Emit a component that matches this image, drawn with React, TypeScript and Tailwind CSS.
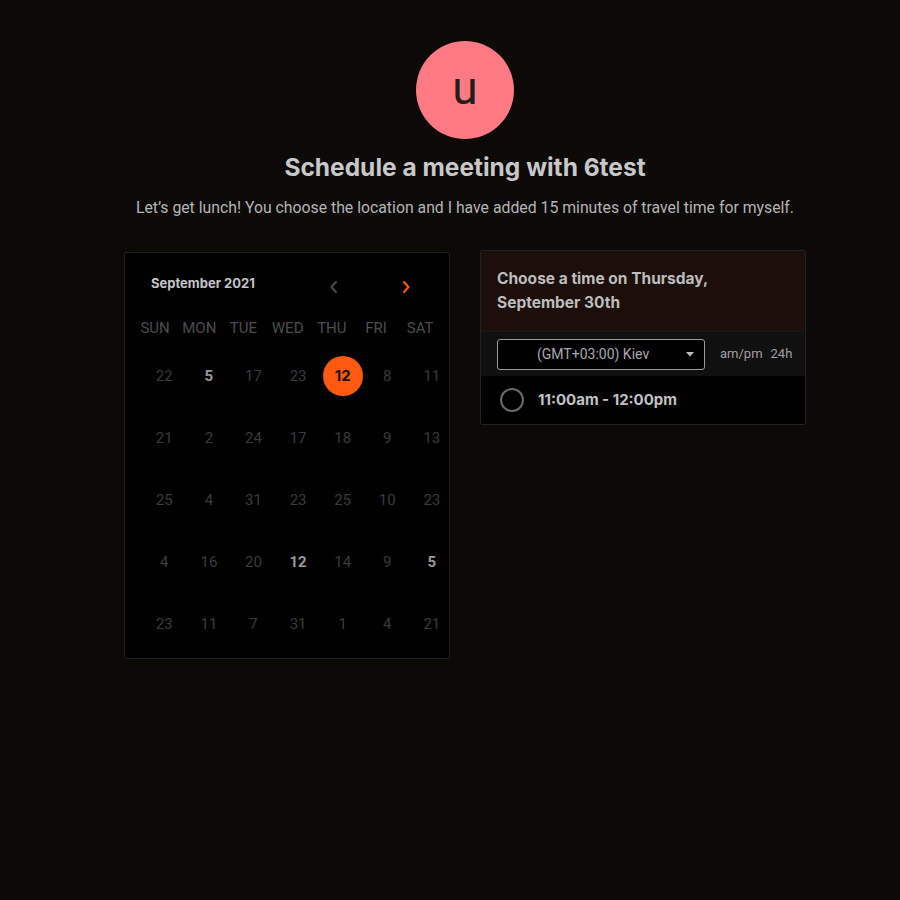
import React from 'react';

const weekdays = ['SUN', 'MON', 'TUE', 'WED', 'THU', 'FRI', 'SAT'];

// value, bold?, selected?
const weeks: [string, boolean?, boolean?][][] = [
  [['22'], ['5', true], ['17'], ['23'], ['12', true, true], ['8'], ['11']],
  [['21'], ['2'], ['24'], ['17'], ['18'], ['9'], ['13']],
  [['25'], ['4'], ['31'], ['23'], ['25'], ['10'], ['23']],
  [['4'], ['16'], ['20'], ['12', true], ['14'], ['9'], ['5', true]],
  [['23'], ['11'], ['7'], ['31'], ['1'], ['4'], ['21']],
];

const Chevron = ({ dir, color }: { dir: 'left' | 'right'; color: string }) => (
  <svg width="10" height="14" viewBox="0 0 10 14" fill="none">
    <path
      d={dir === 'left' ? 'M7 2 L2.5 7 L7 12' : 'M3 2 L7.5 7 L3 12'}
      stroke={color}
      strokeWidth="2"
      strokeLinecap="round"
      strokeLinejoin="round"
    />
  </svg>
);

const Calendar: React.FC = () => (
  <div className="mt-[2px] w-[326px] h-[407px] bg-black border border-[#1f1f1f] rounded-[2px] pt-[19px]">
    {/* Month header */}
    <div className="flex items-center h-[24px] pl-[26px]">
      <span className="text-[13px] font-bold text-[#c4c4c4] font-['Inter',sans-serif]">September 2021</span>
      <div className="ml-[74px] mt-[6px] flex items-center gap-[62px]">
        <Chevron dir="left" color="#4a4a4a" />
        <Chevron dir="right" color="#ff5a14" />
      </div>
    </div>

    {/* Weekday labels */}
    <div className="mt-[20px] pl-[8px] grid grid-cols-[repeat(7,44.2px)] h-[24px] items-center">
      {weekdays.map((d) => (
        <span key={d} className="text-center text-[15px] text-[#4d4d4d] font-['Roboto',sans-serif]">
          {d}
        </span>
      ))}
    </div>

    {/* Dates */}
    <div className="mt-[5px] pl-[17px]">
      {weeks.map((week, i) => (
        <div key={i} className="grid grid-cols-[repeat(7,44.6px)] h-[62px] items-center">
          {week.map(([v, bold, selected], j) =>
            selected ? (
              <div key={j} className="flex justify-center">
                <span className="w-[40px] h-[40px] rounded-full bg-[#ff5a0f] flex items-center justify-center text-[15px] font-bold text-[#1a0a00] font-['Inter',sans-serif]">
                  {v}
                </span>
              </div>
            ) : (
              <span
                key={j}
                className={`text-center text-[15px] font-['Roboto',sans-serif] ${
                  bold ? 'font-bold text-[#9a9a9a]' : 'text-[#3b3b3b]'
                }`}
              >
                {v}
              </span>
            )
          )}
        </div>
      ))}
    </div>
  </div>
);

const TimePanel: React.FC = () => (
  <div className="w-[326px] border border-[#222] rounded-[2px] overflow-hidden">
    <div className="h-[80px] bg-[#1c0e09] px-4 flex items-center">
      <p className="text-[15.5px] leading-[24px] font-bold text-[#bdbdbd] font-['Inter',sans-serif]">
        Choose a time on Thursday,
        <br />
        September 30th
      </p>
    </div>
    <div className="h-[45px] bg-[#101010] flex items-center px-4 border-t border-[#181818]">
      <div className="shrink-0 w-[208px] h-[31px] bg-black border border-[#9a9a9a] rounded-[3px] flex items-center pl-[39px] pr-[10px]">
        <span className="text-[14px] text-[#a8a8a8] font-['Roboto',sans-serif]">(GMT+03:00) Kiev</span>
        <svg className="ml-auto" width="8" height="5" viewBox="0 0 8 5">
          <path d="M0 0 L8 0 L4 4.5 Z" fill="#bdbdbd" />
        </svg>
      </div>
      <span className="ml-[15px] text-[13px] text-[#a0a0a0] font-['Roboto',sans-serif]">am/pm</span>
      <span className="ml-[8px] text-[13px] text-[#a0a0a0] font-['Roboto',sans-serif]">24h</span>
    </div>
    <div className="h-[48px] bg-black flex items-center pl-[19px]">
      <span className="w-[24px] h-[24px] rounded-full border-2 border-[#6a6a6a]" />
      <span className="ml-[14px] text-[15px] font-bold text-[#c2c2c2] font-['Inter',sans-serif]">
        11:00am - 12:00pm
      </span>
    </div>
  </div>
);

const App: React.FC = () => {
  return (
    <div className="min-h-[900px] w-full bg-[#0c0a07] flex flex-col items-center pl-[30px] pt-[41px]">
      {/* Avatar */}
      <div className="w-[98px] h-[98px] rounded-full bg-[#ff7a82] flex items-center justify-center">
        <span className="text-[46px] leading-none text-[#1e1e1e] font-['Roboto',sans-serif] -mt-[4px]">u</span>
      </div>

      <h1 className="mt-[12px] text-[24.5px] leading-[32px] font-bold text-[#c8c8c8] font-['Inter',sans-serif]">
        Schedule a meeting with 6test
      </h1>
      <p className="mt-[15px] text-[15.8px] leading-[20px] text-[#b4b4b4] font-['Roboto',sans-serif]">
        Let’s get lunch! You choose the location and I have added 15 minutes of travel time for myself.
      </p>

      <div className="mt-[32px] flex items-start gap-[30px]">
        <Calendar />
        <TimePanel />
      </div>
    </div>
  );
};

export default App;
